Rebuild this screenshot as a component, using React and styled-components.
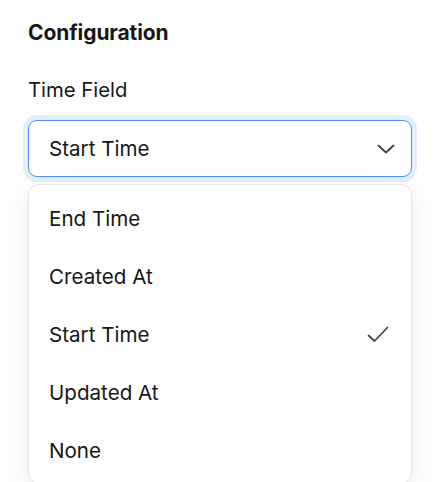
import React from "react";
import styled, { createGlobalStyle } from "styled-components";

const Global = createGlobalStyle`
  html, body { margin: 0; padding: 0; background: #ffffff; }
  body { font-family: Inter, "Noto Sans", sans-serif; color: #171717; -webkit-font-smoothing: antialiased; }
  * { box-sizing: border-box; }
`;

const Page = styled.div`
  padding: 21px 32px 0 28px;
  display: flex;
  flex-direction: column;
`;

const Title = styled.h2`
  margin: 0;
  font-size: 21px;
  line-height: 24px;
  font-weight: 700;
  letter-spacing: -0.1px;
`;

const Label = styled.label`
  margin-top: 33px;
  font-size: 20.3px;
  line-height: 24px;
  font-weight: 400;
`;

const Field = styled.div`
  display: flex;
  flex-direction: column;
  margin-top: 18px;
`;

const Trigger = styled.button`
  width: 100%;
  height: 57px;
  display: flex;
  align-items: center;
  justify-content: space-between;
  padding: 0 16px 0 20px;
  border: 1.5px solid #4f8ff7;
  border-radius: 9px;
  background: #fff;
  box-shadow: 0 0 0 5px #e4effd;
  font-family: inherit;
  font-size: 20.6px;
  color: #171717;
  cursor: pointer;
`;

const Menu = styled.ul`
  margin: 7px 0 0;
  padding: 4px 0;
  list-style: none;
  background: #fff;
  border: 1px solid #e7e8eb;
  border-radius: 11px;
  box-shadow: 0 8px 28px rgba(0, 0, 0, 0.07), 0 2px 6px rgba(0, 0, 0, 0.03);
`;

const Item = styled.li`
  height: 58px;
  display: flex;
  align-items: center;
  justify-content: space-between;
  padding: 0 22px 0 20px;
  font-size: 20.6px;
  color: #171717;
`;

const Chevron = () => (
  <svg width="18" height="12" viewBox="0 0 18 12" fill="none">
    <path d="M1.5 2.5 9 9.5l7.5-7" stroke="#3f3f46" strokeWidth="1.8" strokeLinecap="round" strokeLinejoin="round" />
  </svg>
);

const Check = () => (
  <svg width="22" height="17" viewBox="0 0 22 17" fill="none">
    <path d="M1.5 9.5 7.5 15 20.5 1.5" stroke="#3f3f4e" strokeWidth="1.7" strokeLinecap="round" strokeLinejoin="round" />
  </svg>
);

const options = ["End Time", "Created At", "Start Time", "Updated At", "None"];

export default function App() {
  const selected = "Start Time";
  return (
    <>
      <Global />
      <Page>
        <Title>Configuration</Title>
        <Label>Time Field</Label>
        <Field>
          <Trigger>
            <span>{selected}</span>
            <Chevron />
          </Trigger>
          <Menu>
            {options.map((o) => (
              <Item key={o}>
                <span>{o}</span>
                {o === selected && <Check />}
              </Item>
            ))}
          </Menu>
        </Field>
      </Page>
    </>
  );
}
